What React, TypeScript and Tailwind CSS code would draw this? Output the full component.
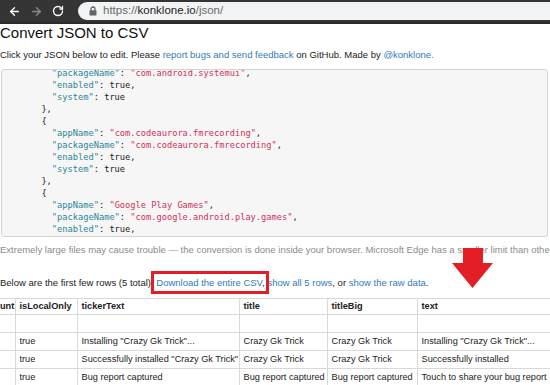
import React from 'react';
import { ArrowLeft, ArrowRight, RotateCw } from 'lucide-react';

const K = ({ children }: { children: React.ReactNode }) => <span className="text-[#2b8798]">{children}</span>;
const S = ({ children }: { children: React.ReactNode }) => <span className="text-[#d2305a]">{children}</span>;

function Entry({ app, pkg, first, last }: { app?: string; pkg: string; first?: boolean; last?: boolean }) {
  return (
    <>
      {!first && <div>{'      {'}</div>}
      {app && (
        <div>
          {'        '}<K>"appName"</K>: <S>"{app}"</S>,
        </div>
      )}
      <div>
        {'        '}<K>"packageName"</K>: <S>"{pkg}"</S>,
      </div>
      <div>
        {'        '}<K>"enabled"</K>: true,
      </div>
      {!last && (
        <>
          <div>
            {'        '}<K>"system"</K>: true
          </div>
          <div>{'      },'}</div>
        </>
      )}
    </>
  );
}

const rows = [
  ['', '', '', '', '', ''],
  ['', 'true', 'Installing "Crazy Gk Trick"...', 'Crazy Gk Trick', 'Crazy Gk Trick', 'Installing "Crazy Gk Trick"...'],
  ['', 'true', 'Successfully installed "Crazy Gk Trick"', 'Crazy Gk Trick', 'Crazy Gk Trick', 'Successfully installed'],
  ['', 'true', 'Bug report captured', 'Bug report captured', 'Bug report captured', 'Touch to share your bug report'],
];

const widths = ['w-[15px]', 'w-[62px]', 'w-[162px]', 'w-[88px]', 'w-[90px]', 'w-[160px]'];

export default function App() {
  return (
    <div className="relative w-[550px] h-[385px] overflow-hidden bg-white font-['Liberation_Sans',Arial,sans-serif] text-[#222]">
      {/* browser bar */}
      <div className="h-[24px] bg-[#353535] border-b-2 border-[#2a2a2a] flex items-center">
        <div className="flex items-center gap-[9px] pl-[8px] pr-[8px]">
          <ArrowLeft size={13} strokeWidth={2.5} className="text-white" />
          <ArrowRight size={13} strokeWidth={2.5} className="text-[#8a8a8a]" />
          <RotateCw size={12} strokeWidth={2.7} className="text-white" />
        </div>
        <div className="flex-1 h-[18px] ml-[6px] -mr-[20px] rounded-full bg-[#f1f3f4] flex items-center pl-[11px]">
          <svg width="8" height="10" viewBox="0 0 8 10" className="mr-[6px]">
            <path d="M2 4.5V3a2 2 0 0 1 4 0v1.5" fill="none" stroke="#5f6368" strokeWidth="1.3" />
            <rect x="0.5" y="4.3" width="7" height="5.2" rx="0.8" fill="#5f6368" />
          </svg>
          <span className="text-[11.5px] leading-none text-[#6b6b6b]">
            https://<span className="text-[#202124]">konklone.io</span>/json/
          </span>
        </div>
      </div>

      <h1 className="text-[15px] leading-[16px] font-normal text-[#111] mt-[1px]">Convert JSON to CSV</h1>
      <p className="text-[9.5px] leading-[12px] mt-[8px] text-[#222]">
        Click your JSON below to edit. Please <span className="text-[#337ab7]">report bugs and send feedback</span> on GitHub. Made by{' '}
        <span className="text-[#337ab7]">@konklone.</span>
      </p>

      <div className="mt-[8px] ml-[1px] mr-[2px] h-[168px] border border-[#d4d4d4] rounded-[3px] bg-[#f6f6f6] overflow-hidden">
        <pre className="-mt-[3px] pl-[8px] font-['DejaVu_Sans_Mono',monospace] text-[8.7px] leading-[12px] text-[#222]">
          <Entry pkg="com.android.systemui" first />
          <Entry app="com.codeaurora.fmrecording" pkg="com.codeaurora.fmrecording" />
          <Entry app="Google Play Games" pkg="com.google.android.play.games" last />
        </pre>
      </div>

      <p className="mt-[7px] text-[9.5px] leading-[12px] text-[#8c8c8c] whitespace-nowrap">
        Extremely large files may cause trouble — the conversion is done inside your browser. Microsoft Edge has a smaller limit than other browsers.
      </p>

      <p className="mt-[21px] text-[9.5px] leading-[12px] text-[#222] whitespace-nowrap">
        Below are the first few rows (5 total): <span className="text-[#337ab7]">Download the entire CSV</span>,{' '}
        <span className="text-[#337ab7]">show all 5 rows</span>, or <span className="text-[#337ab7]">show the raw data</span>.
      </p>

      <table className="mt-[9px] border-collapse text-[9.2px] text-[#222] table-fixed w-[577px]">
        <thead>
          <tr className="h-[16px]">
            {['unt', 'isLocalOnly', 'tickerText', 'title', 'titleBig', 'text'].map((h, i) => (
              <th
                key={h}
                className={`${widths[i]} border border-[#d9d9d9] text-left font-bold px-[4px] py-0 whitespace-nowrap ${i === 0 ? 'border-l-0 pl-0' : ''}`}
              >
                {h}
              </th>
            ))}
          </tr>
        </thead>
        <tbody>
          {rows.map((r, ri) => (
            <tr key={ri} className="h-[18px]">
              {r.map((c, ci) => (
                <td key={ci} className={`border border-[#d9d9d9] px-[4px] py-0 whitespace-nowrap overflow-hidden ${ci === 0 ? 'border-l-0' : ''}`}>
                  {c}
                </td>
              ))}
            </tr>
          ))}
        </tbody>
      </table>

      {/* annotation overlays */}
      <div className="absolute left-[151px] top-[271px] w-[118px] h-[23px] border-[3px] border-[#e41e26]" />
      <svg className="absolute left-[452px] top-[248px]" width="42" height="41" viewBox="0 0 42 41">
        <polygon points="11,0 31,0 31,15 41,15 20.5,40 0,15 11,15" fill="#e41e26" />
      </svg>
    </div>
  );
}
